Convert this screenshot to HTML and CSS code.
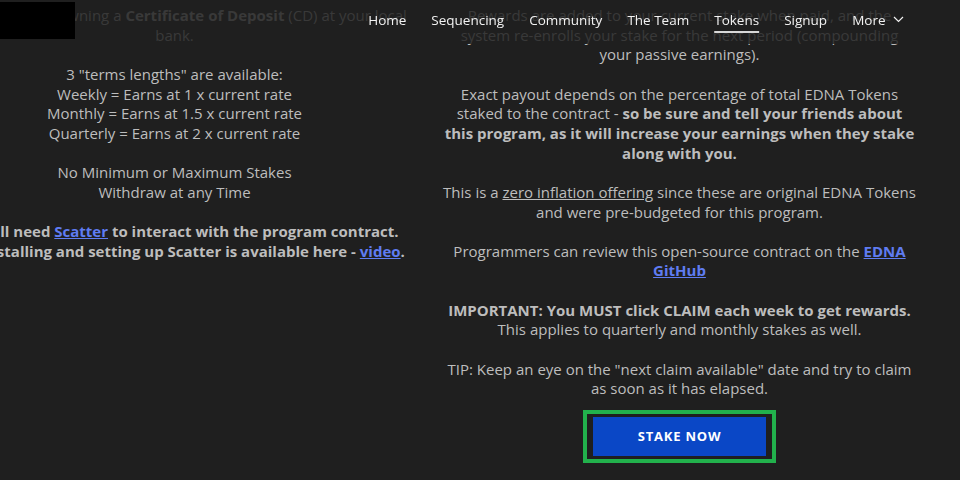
FILE: index.html
```html
<!DOCTYPE html>
<html lang="en">
<head>
    <meta charset="UTF-8">
    <meta name="viewport" content="width=device-width, initial-scale=1.0">
    <title>Tokens - Staking</title>
    <link rel="stylesheet" href="styles.css">
</head>
<body>

    <header class="site-header">
        <div class="logo"></div>
        <nav class="nav">
            <a href="#">Home</a>
            <a href="#">Sequencing</a>
            <a href="#">Community</a>
            <a href="#">The Team</a>
            <a href="#" class="active">Tokens</a>
            <a href="#">Signup</a>
            <a href="#" class="more">More
                <svg width="11" height="7" viewBox="0 0 11 7"><path d="M1 1l4.5 4.5L10 1" fill="none" stroke="currentColor" stroke-width="1.2"/></svg>
            </a>
        </nav>
    </header>

    <main class="content">
        <section class="col">
            <p>This is similar to owning a <b>Certificate of Deposit</b> (CD) at your local<br>bank.</p>
            <p>3 "terms lengths" are available:<br>
               Weekly = Earns at 1 x current rate<br>
               Monthly = Earns at 1.5 x current rate<br>
               Quarterly = Earns at 2 x current rate</p>
            <p>No Minimum or Maximum Stakes<br>Withdraw at any Time</p>
            <p><b>You will need <a href="#">Scatter</a> to interact with the program contract.<br>
               Help installing and setting up Scatter is available here - <a href="#">video</a>.</b></p>
        </section>

        <section class="col">
            <p>Rewards are added to your current stake when paid, and the<br>
               system re-enrolls your stake for the next period (compounding<br>
               your passive earnings).</p>
            <p>Exact payout depends on the percentage of total EDNA Tokens<br>
               staked to the contract - <b>so be sure and tell your friends about<br>
               this program, as it will increase your earnings when they stake<br>
               along with you.</b></p>
            <p>This is a <u>zero inflation offering</u> since these are original EDNA Tokens<br>
               and were pre-budgeted for this program.</p>
            <p>Programmers can review this open-source contract on the <a href="#"><b>EDNA<br>GitHub</b></a></p>
            <p><b>IMPORTANT: You MUST click CLAIM each week to get rewards.</b><br>
               This applies to quarterly and monthly stakes as well.</p>
            <p>TIP: Keep an eye on the "next claim available" date and try to claim<br>
               as soon as it has elapsed.</p>
            <div class="stake-frame">
                <button class="stake-btn">STAKE NOW</button>
            </div>
        </section>
    </main>

</body>
</html>
```

FILE: styles.css
```css
body {
    margin: 0;
    background-color: #1f1f1f;
    color: #bdbdbd;
    font-family: "Open Sans", "DejaVu Sans", sans-serif;
    font-size: 15px;
    line-height: 19.65px;
    overflow: hidden;
}
.site-header {
    position: fixed;
    top: 0;
    left: 0;
    right: 0;
    height: 44px;
    display: flex;
    align-items: flex-start;
    justify-content: space-between;
    background-color: rgba(31, 31, 31, 0.84);
    z-index: 2;
}
.logo {
    width: 75px;
    height: 37px;
    margin-top: 2px;
    background-color: #000;
}
.nav {
    display: flex;
    align-items: flex-start;
    gap: 25px;
    padding: 11px 56px 0 0;
    font-size: 13.5px;
}
.nav a {
    display: block;
    color: #f2f2f2;
    text-decoration: none;
    line-height: 18px;
}
.nav a.active {
    text-decoration: underline;
    text-decoration-color: #d8d8d8;
    text-decoration-thickness: 2px;
    text-underline-offset: 6px;
}
.nav .more svg {
    margin-left: 4px;
    vertical-align: 2px;
}
.content {
    display: flex;
    gap: 16px;
    margin-left: -70px;
    padding-top: 6px;
}
.col {
    flex: 0 0 489px;
    min-width: 0;
    text-align: center;
}
.col p {
    margin: 0 0 19.65px;
}
.col b {
    font-weight: 700;
}
.col a {
    color: #5f7cf2;
    font-weight: 700;
    text-decoration: underline;
}
.stake-frame {
    display: inline-block;
    margin-top: -9px;
    padding: 3px 6px;
    border: 4px solid #22b14c;
}
.stake-btn {
    display: block;
    width: 173px;
    height: 39px;
    border: none;
    background-color: #0a47c6;
    color: #fff;
    font-family: inherit;
    font-size: 13px;
    font-weight: 700;
    letter-spacing: 0.8px;
    cursor: pointer;
}
```
